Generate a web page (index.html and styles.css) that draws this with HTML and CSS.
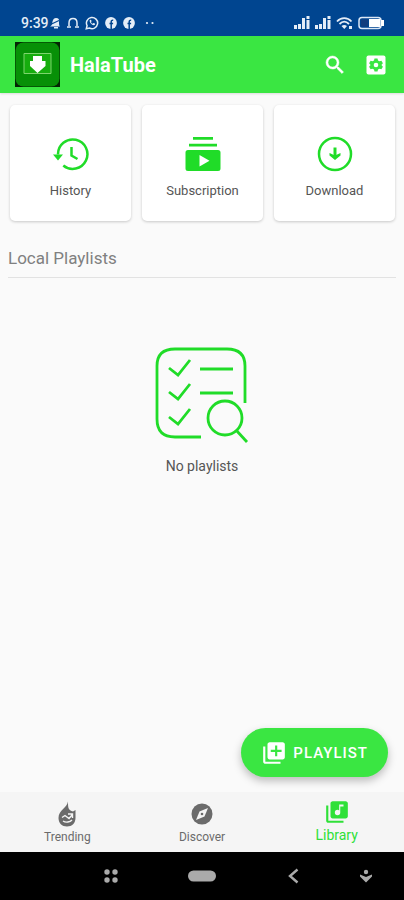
FILE: index.html
```html
<!DOCTYPE html>
<html lang="en">
<head>
<meta charset="utf-8">
<meta name="viewport" content="width=device-width, initial-scale=1">
<title>HalaTube</title>
<link rel="stylesheet" href="styles.css">
</head>
<body>
<div class="status-bar">
  <div class="status-left">
    <span class="clock">9:39</span>
    <svg width="12" height="12" viewBox="0 0 12 12" fill="currentColor"><path d="M1 9.500c2-1 2-2 2.500-5C4 2 5.500 1 7 1c2.500 0 3.500 1.500 3 4 0 2 0 3.500 1 4.500zM5 10h4v1.500H5z"/><path d="M1.500 7.500 10 3.500" stroke="#004590" stroke-width="1.200"/></svg>
    <svg width="12" height="12" viewBox="0 0 12 12" fill="none" stroke="currentColor" stroke-width="1.500"><path d="M2 9V6c0-6 8-6 8 0v3M0 10h4M8 10h4"/></svg>
    <svg width="14" height="14" viewBox="0 0 14 14" fill="none" stroke="currentColor" stroke-width="1.500"><path d="m1.300 12.700.8-3A5.600 5.600 0 1 1 4.400 12z"/><path d="M4.800 4c-.8 2.300 2.400 6 5 5l.2-1.400-1.700-.6-.8.7C6.600 7.300 6.200 6.800 6 6l.6-.8-.6-1.500z" fill="currentColor" stroke="none"/></svg>
    <svg width="12" height="12" viewBox="0 0 12 12" fill="currentColor"><circle cx="6" cy="6" r="5.900"/><path d="M6.200 12V5c0-1.300.8-2 2-1.800M4.500 6.500h3.600" fill="none" stroke="#004590" stroke-width="1.500"/></svg>
    <svg width="12" height="12" viewBox="0 0 12 12" fill="currentColor"><circle cx="6" cy="6" r="5.900"/><path d="M6.200 12V5c0-1.300.8-2 2-1.800M4.500 6.500h3.600" fill="none" stroke="#004590" stroke-width="1.500"/></svg>
    <svg class="more" width="10" height="4" viewBox="0 0 10 4" fill="currentColor"><circle cx="2" cy="2" r="1.100"/><circle cx="7.500" cy="2" r="1.100"/></svg>
  </div>
  <div class="status-right">
    <svg width="16" height="14" viewBox="0 0 16 14" fill="currentColor"><path d="M0 9h3v4H0zM4 8h3v5H4zM8 2h3v11H8zM12.500 0h3v3h-3zM12.500 4h3v9h-3z"/></svg>
    <svg width="16" height="14" viewBox="0 0 16 14" fill="currentColor"><path d="M0 9h3v4H0zM4 8h3v5H4zM8 2h3v11H8zM12.500 0h3v3h-3zM12.500 4h3v9h-3z"/></svg>
    <svg width="17" height="14" viewBox="0 0 17 14" fill="none" stroke="currentColor" stroke-width="1.800"><path d="M1 5.500c4-4.500 10.500-4.500 14.500 0M3.500 8c3-3 6.500-3 9.500 0"/><path d="M5.500 10c2-1.500 3.500-1.500 5.500 0l-2.700 3zM13 10h3v3h-3z" fill="currentColor" stroke="none"/></svg>
    <svg width="27" height="14" viewBox="0 0 27 14"><rect x="1" y="1.500" width="22" height="11" rx="3" fill="none" stroke="#dce8f5" stroke-width="1.500"/><path d="M11 3h11v8H11z" fill="#fff"/><path d="M3 3.500h7v7H3z" fill="#123d7d"/><path d="M23 4h3v6h-3z" fill="#fff"/></svg>
  </div>
</div>

<header class="app-bar">
  <svg class="logo" width="45" height="45" viewBox="0 0 45 45"><path fill="#042504" d="M0 0h45v45H0z"/><rect x=".5" y=".5" width="44" height="44" rx="8" fill="#079007"/><path d="M9 11.500h27v20H9z" fill="#16ad0e" stroke="#7dd46d" stroke-width="1"/><path d="M18 14h9v5h3.500v5L22.500 31 15 24v-5h3z" fill="#fff"/></svg>
  <h1 class="title">HalaTube</h1>
  <button class="icon-button" aria-label="Search"><svg width="24" height="24" viewBox="0 0 24 24" fill="currentColor" stroke="currentColor" stroke-width=".5"><path d="M15.500 14h-.79l-.28-.27A6.470 6.470 0 0 0 16 9.500 6.500 6.500 0 1 0 9.500 16c1.610 0 3.090-.59 4.230-1.570l.27.28v.79l5 4.990L20.490 19zm-6 0a4.500 4.500 0 1 1 0-9 4.500 4.500 0 0 1 0 9z"/></svg></button>
  <button class="icon-button" aria-label="Settings"><svg width="24" height="24" viewBox="0 0 24 24"><rect x="2.500" y="2.500" width="19" height="19" rx="2" fill="#fff"/><path d="m10.500 5.500-.5 2-1.500.8-1.900-.6-1.500 2.600 1.500 1.700-1.500 1.700 1.500 2.600 1.900-.6 1.500.8.5 2h3l.5-2 1.500-.8 1.900.6 1.500-2.600-1.500-1.700 1.500-1.700-1.500-2.600-1.900.6-1.500-.8-.5-2z" fill="#3ae642"/><circle cx="12" cy="12" r="2.300" fill="#fff"/></svg></button>
</header>

<main class="content">
  <nav class="cards" aria-label="Shortcuts">
    <a class="card" href="#history"><svg width="38" height="38" viewBox="0 0 38 38" fill="none" stroke="currentColor" stroke-width="2.500"><path d="M6 19.500A14.700 14.700 0 1 1 11.300 30.500"/><path d="M19.500 12v8.500l6 3.500"/><path d="M1 19.500h10L6 25.500z" fill="currentColor" stroke="none"/></svg><span>History</span></a>
    <a class="card" href="#subscription"><svg width="38" height="38" viewBox="0 0 38 38" fill="currentColor"><path d="M9 2h20v2.800H9zM5 8.700h28v2.800H5z"/><path fill-rule="evenodd" d="M4 15h30q2.500 0 2.500 2.500v16Q36.500 36 34 36H4q-2.500 0-2.500-2.500v-16Q1.500 15 4 15zm11.500 5v11.500L25.500 25.700z"/></svg><span>Subscription</span></a>
    <a class="card" href="#download"><svg width="38" height="38" viewBox="0 0 38 38" fill="none" stroke="currentColor" stroke-width="2.500"><circle cx="19" cy="19" r="16"/><path d="M19 12.500V21" stroke-width="3"/><path d="M13.500 18 19 20.500l5.500-2.500v2.500L19 25l-5.500-4.500z" fill="currentColor" stroke="none"/></svg><span>Download</span></a>
  </nav>

  <section>
    <h2 class="section-title">Local Playlists</h2>
    <div class="empty">
      <svg width="96" height="98" viewBox="0 0 96 98" fill="none" stroke="currentColor" stroke-width="2.800"><path d="M47 91H21Q3 91 3 73V20Q3 3 21 3h52q18 0 18 17v37"/><path d="m15 22 9 7 12-15M15 46l9 7 12-15M15 71l9 7 12-15M46 23h33M46 47h33"/><circle cx="71" cy="72" r="17"/><path d="m82 84 11 12"/></svg>
      <p>No playlists</p>
    </div>
  </section>
</main>

<footer class="bottom">
  <button class="fab"><svg width="26" height="26" viewBox="0 0 24 24" fill="currentColor"><path d="M4 6H2v14c0 1.100.9 2 2 2h14v-2H4z"/><path d="M20 2H8c-1.100 0-2 .9-2 2v12c0 1.100.9 2 2 2h12c1.100 0 2-.9 2-2V4c0-1.100-.9-2-2-2zm-1 9h-4v4h-2v-4H9V9h4V5h2v4h4z"/></svg><span>PLAYLIST</span></button>
  <nav class="tabs" aria-label="Main">
    <a class="tab" href="#trending"><svg width="26" height="26" viewBox="0 0 26 26"><path d="M14 .5C13 7 4.500 9 4.500 17c0 5 3.500 8.500 8.500 8.500s8.500-3.500 8.500-8.500V9l-2.500 1.500c-2-.5-4-1.500-4.500-3.500C14 5 14 3 14 .5z" fill="currentColor"/><path d="m8 16.500 3-2 4 3 3-3.500M14 13h4.500v4M9 20c3 2 7 1 9-1" fill="none" stroke="#f5f5f5" stroke-width="1.400"/></svg><span>Trending</span></a>
    <a class="tab" href="#discover"><svg width="26" height="26" viewBox="0 0 26 26"><circle cx="13" cy="13" r="10.500" fill="currentColor"/><path d="m19 7-3.500 8.500L7 19l3.500-8.500z" fill="#f5f5f5"/><circle cx="13" cy="13" r="1.300" fill="currentColor"/></svg><span>Discover</span></a>
    <a class="tab active" href="#library" aria-current="page"><svg width="26" height="26" viewBox="0 0 24 24" fill="currentColor"><path d="M4 6H2v14c0 1.100.9 2 2 2h14v-2H4z"/><path d="M20 2H8c-1.100 0-2 .9-2 2v12c0 1.100.9 2 2 2h12c1.100 0 2-.9 2-2V4c0-1.100-.9-2-2-2zm-2 5h-3v5.500a2.500 2.500 0 1 1-2.500-2.500c.57 0 1.080.19 1.500.51V5h4z" fill-rule="evenodd"/></svg><span>Library</span></a>
  </nav>
  <div class="system-nav">
    <button aria-label="Apps"><svg width="16" height="16" viewBox="0 0 16 16" fill="currentColor"><circle cx="4" cy="4" r="2.700"/><circle cx="12" cy="4" r="2.700"/><circle cx="4" cy="12" r="2.700"/><circle cx="12" cy="12" r="2.700"/></svg></button>
    <button aria-label="Home"><svg width="28" height="12" viewBox="0 0 28 12" fill="currentColor"><rect y=".5" width="28" height="11" rx="5.500"/></svg></button>
    <button aria-label="Back"><svg width="12" height="16" viewBox="0 0 12 16" fill="none" stroke="currentColor" stroke-width="2.400"><path d="M10.500 1.500 3 8l7.500 6.500"/></svg></button>
    <button aria-label="Hide bar"><svg width="12" height="14" viewBox="0 0 12 14" fill="currentColor"><circle cx="6" cy="3" r="2.200"/><path d="m0 5.500 6 2.500 6-2.500V7.500l-6 6-6-6z"/></svg></button>
  </div>
</footer>
</body>
</html>
```
FILE: styles.css
```css
* { box-sizing: border-box; }

body {
  margin: 0;
  min-height: 100vh;
  display: flex;
  flex-direction: column;
  background: #fafafa;
  color: #555;
  font-family: Roboto, "Liberation Sans", sans-serif;
}

svg { display: block; flex: none; }
a { color: inherit; text-decoration: none; }
h1, h2, p { margin: 0; }
button {
  padding: 0;
  border: 0;
  background: none;
  color: inherit;
  font: inherit;
  cursor: pointer;
}

.status-bar {
  display: flex;
  justify-content: space-between;
  align-items: center;
  height: 36px;
  padding: 10px 19px 0 21px;
  background: #004590;
  color: #e4edf7;
}
.status-left, .status-right { display: flex; align-items: center; }
.status-left { gap: 6px; }
.status-right { gap: 5px; }
.clock { font-size: 14px; font-weight: 500; margin-right: -6px; }
.more { margin-left: 4px; }

.app-bar {
  display: flex;
  align-items: center;
  height: 57px;
  padding: 0 16px 0 15px;
  background: #3ae642;
  color: #fff;
  box-shadow: 0 1px 2px rgba(0, 0, 0, .12);
}
.title {
  flex: 1;
  margin-left: 10px;
  font-size: 20px;
  line-height: 24px;
  font-weight: 700;
}
.icon-button + .icon-button { margin-left: 17px; }

.content { flex: 1; padding: 12px 8px; }

.cards {
  display: grid;
  grid-template-columns: repeat(3, 1fr);
  gap: 11px;
  padding: 0 1px 0 2px;
}
.card {
  display: flex;
  flex-direction: column;
  align-items: center;
  gap: 9px;
  padding: 30px 0 21px;
  border-radius: 5px;
  background: #fff;
  box-shadow: 0 1px 3px rgba(0, 0, 0, .2);
  font-size: 13px;
  line-height: 18px;
}
.card svg { color: #20dc28; }

.section-title {
  margin-top: 26px;
  padding-bottom: 8px;
  border-bottom: 1px solid #e2e2e2;
  color: #808080;
  font-size: 17px;
  line-height: 22px;
  font-weight: 400;
}

.empty {
  display: flex;
  flex-direction: column;
  align-items: center;
  gap: 13px;
  padding-top: 68px;
  font-size: 14px;
  line-height: 18px;
}
.empty svg { color: #20dc28; }

.bottom { position: relative; }

.fab {
  position: absolute;
  right: 16px;
  bottom: 123px;
  display: flex;
  align-items: center;
  gap: 6px;
  height: 49px;
  padding: 0 20px;
  border-radius: 25px;
  background: #3ae642;
  color: #fff;
  font-size: 15px;
  font-weight: 500;
  letter-spacing: 1px;
  box-shadow: 0 4px 8px rgba(0, 0, 0, .25);
}

.tabs {
  display: grid;
  grid-template-columns: repeat(3, 1fr);
  height: 60px;
  background: #f5f5f5;
}
.tab {
  display: flex;
  flex-direction: column;
  align-items: center;
  gap: 1px;
  padding-top: 9px;
  color: #6b6b6b;
  font-size: 12px;
  line-height: 18px;
}
.tab.active {
  padding-top: 7px;
  color: #2fe038;
  font-size: 14px;
}

.system-nav {
  display: grid;
  grid-template-columns: 1fr 1fr 1fr 56px;
  height: 48px;
  padding: 0 10px 0 65px;
  background: #000;
  color: #aaa;
}
.system-nav button {
  display: flex;
  align-items: center;
  justify-content: center;
}
```
